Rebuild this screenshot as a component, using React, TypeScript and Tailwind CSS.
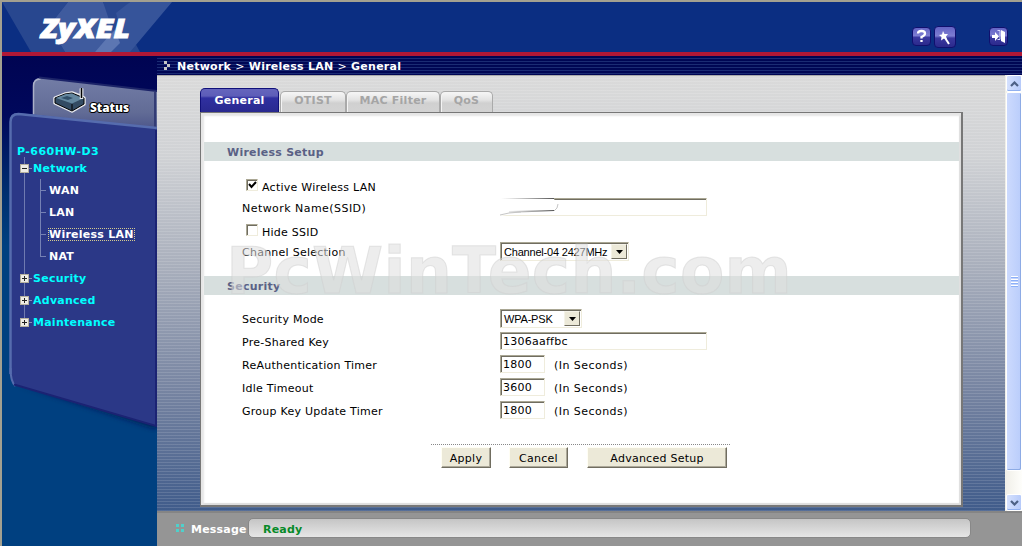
import { ReactNode } from "react";

const menu = ["WAN", "LAN", "Wireless LAN", "NAT"];
const sections = ["Security", "Advanced", "Maintenance"];

function TreeBox({ open }: { open?: boolean }) {
  return (
    <svg width="13" height="9" className="shrink-0" shapeRendering="crispEdges">
      <rect width="9" height="9" fill="#b5b09e" />
      <rect x="1" y="1" width="7" height="7" fill="#efede6" />
      <path d="M2 4h5v1H2z" fill="#222" />
      {!open && <path d="M4 2h1v5H4z" fill="#222" />}
      <path d="M9 4h3v1H9z" fill="#8690b8" />
    </svg>
  );
}

function Sidebar() {
  return (
    <aside className="relative w-[155px] shrink-0 bg-[linear-gradient(#000452_0,#00085c_60px,#003070_140px,#004080_190px)]">
      <svg className="absolute top-0 left-0" width="155" height="490">
        <defs>
          <linearGradient id="status" x2="0" y2="1">
            <stop offset="0" stopColor="#737da6" />
            <stop offset="0.6" stopColor="#626c96" />
            <stop offset="1" stopColor="#454e86" />
          </linearGradient>
          <filter id="soft" x="-10%" y="-10%" width="120%" height="120%">
            <feGaussianBlur stdDeviation="3" />
          </filter>
        </defs>
        <path d="M31 66V29q1-8 8-7l116 13v44z" fill="url(#status)" />
        <path d="M31.500 66V30q0-7 7-7" fill="none" stroke="#aab0c8" strokeWidth="1.500" />
        <path d="M37 21.500L155 35" stroke="#1c2468" strokeWidth="2" />
        <path d="M153 36v35" stroke="#333c75" strokeWidth="2" />
        <path d="M16 327L155 372v-12z" fill="#001448" filter="url(#soft)" />
        <path d="M8 64q1-8 9-7l138 15v298L19 331q-11-3-11-13z" fill="#2b3887" />
        <path d="M8.500 318V66q0-8 8-8L155 72" fill="none" stroke="#566cae" strokeWidth="2.500" />
        <path d="M8.500 312q0 14 5 18" fill="none" stroke="#566cae" strokeWidth="2" />
        <path d="M12 328.500L154 370V74" fill="none" stroke="#1b2373" strokeWidth="2" />
        {/* router */}
        <g strokeLinejoin="round">
          <path d="M53 42l10-4 7-1 8 3 4 2v6l-12 7-17-8zM79.500 33v10" fill="#e5e7ec" stroke="#e5e7ec" strokeWidth="3.500" />
          <path d="M53 42l10-4 7-1 12 5v6l-12 7-17-8z" fill="#334b63" stroke="#000" />
          <path d="M54 42l10-4 6-.5 11 5-11 5z" fill="#64879f" />
          <path d="M59 42l6-2 6 2-5 2z" fill="#304e68" />
          <path d="M70 48v6" stroke="#000" />
          <path d="M79.500 32v11" stroke="#dfe3ea" strokeWidth="3.500" />
          <path d="M79.500 32v10" stroke="#000" strokeWidth="1.500" />
        </g>
        <text x="88" y="56" fill="#fff" stroke="#000" strokeWidth="2" paintOrder="stroke" textLength="39" lengthAdjust="spacingAndGlyphs" className="font-[Open_Sans,sans-serif] text-[13px] font-extrabold">Status</text>
      </svg>
      <nav className="relative pt-[87px] pl-[15px] text-[11px] leading-[17px] font-bold tracking-[0.25px] text-[#00ffff]">
        <div className="absolute top-[101px] left-[22px] h-[164px] w-px bg-[#6f7ab0]" />
        <div className="tracking-[0.45px]">P-660HW-D3</div>
        <div className="relative flex h-[17px] items-center pl-[3px]">
          <TreeBox open />
          <span>Network</span>
        </div>
        <ul className="ml-[23px] pt-[2px] text-white">
          {menu.map((item) => (
            <li key={item} className="relative flex h-[22px] items-center">
              <i className={item === "NAT" ? "absolute top-0 left-0 h-[11px] w-px bg-[#7581b4]" : "absolute top-0 left-0 h-[22px] w-px bg-[#7581b4]"} />
              <i className="mr-[3px] h-px w-[6px] bg-[#7581b4]" />
              <span className={item === "Wireless LAN" ? "leading-[11px] outline-1 outline-dotted outline-[#d5cb90]" : ""}>{item}</span>
            </li>
          ))}
        </ul>
        {sections.map((s) => (
          <div key={s} className="relative flex h-[22px] items-center pl-[3px]">
            <TreeBox />
            <span>{s}</span>
          </div>
        ))}
      </nav>
    </aside>
  );
}

function HeaderIcon({ big, children }: { big?: boolean; children: ReactNode }) {
  return (
    <svg width={big ? 22 : 19} height={big ? 22 : 19} viewBox={big ? "0 0 22 22" : "0 0 19 19"}>
      <defs>
        <linearGradient id="btn" x2="0" y2="1">
          <stop offset="0" stopColor="#6262c4" />
          <stop offset="0.450" stopColor="#7d7dd2" />
          <stop offset="0.550" stopColor="#3a389f" />
          <stop offset="1" stopColor="#2b298b" />
        </linearGradient>
      </defs>
      <rect x="0.500" y="0.500" width={big ? 21 : 18} height={big ? 21 : 18} rx="3.500" fill="url(#btn)" stroke="#10106e" />
      {children}
    </svg>
  );
}

function Header() {
  return (
    <header className="relative flex h-[54px] shrink-0 justify-between overflow-hidden border-b-4 border-[#b01836] bg-[#0b2e82]">
      <svg width="180" height="50">
        <path d="M0 0h66L47 24l16 26H29z" fill="#28478f" />
        <path d="M66 0h35l30 50H63L47 24z" fill="#3f5b9e" />
        <path d="M101 0h27l-11 11 21 39h-20z" fill="#28478f" />
        <path d="M128 0h42l-42 50H93l24-28-3-11z" fill="#36549a" />
        <path d="M105 36l8-8 5 13-9 9H93z" fill="#5c76b2" />
        <text x="39" y="36" fill="#fff" stroke="#fff" strokeWidth="0.800" textLength="89" lengthAdjust="spacingAndGlyphs" className="font-[Open_Sans,sans-serif] text-[26px] font-extrabold italic">ZyXEL</text>
      </svg>
      <div className="flex pt-[24px] pr-[14px]">
        <div className="mt-px"><HeaderIcon><path d="M6 6.500q0-2.500 3.500-2.500T13 6.500q0 2-3.500 3.500v1.500M9.500 13v2" fill="none" stroke="#fff" strokeWidth="2.300" /></HeaderIcon></div>
        <div className="ml-[3px]">
          <HeaderIcon big>
            <path d="M9 5l1.500 3 3.500 0-2 2.500 1 3-3-1-3 2 .5-3.500-2.500-2 3-.5z" fill="#fff" />
            <path d="M10.500 11l4.500 7" stroke="#fff" strokeWidth="2" />
          </HeaderIcon>
        </div>
        <div className="mt-px ml-[33px]">
          <HeaderIcon>
            <path d="M3 8h3V5l4 4.500L6 14v-3H3zM12 3l4 2v11l-4-2z" fill="#fff" />
            <path d="M8.500 3.500H11v9H8.500" fill="none" stroke="#d8d8ff" />
          </HeaderIcon>
        </div>
      </div>
    </header>
  );
}

const tabClass = "flex h-[21px] items-center justify-center rounded-t-[5px] border border-b-0 border-[#aaa] bg-[linear-gradient(#f7f7f7,#e3e3e3_40%,#d0d0d0_55%,#d3d3d3)] pb-[3px] text-[#a5a5a5] shadow-[inset_1px_1px_#f4f4f4]";

function Tabs() {
  return (
    <div className="flex h-[24px] items-end pl-[43px] text-[11px] font-bold tracking-[0.25px]">
      <div className="flex h-[24px] w-[79px] items-center justify-center rounded-t-[5px] border border-b-0 border-[#10107a] bg-[linear-gradient(#6565bd_0,#5d5db8_7px,#3030a0_9px,#29298f)] text-white">General</div>
      <div className={tabClass + " ml-px w-[66px]"}>OTIST</div>
      <div className={tabClass + " w-[94px]"}>MAC Filter</div>
      <div className={tabClass + " w-[53px]"}>QoS</div>
    </div>
  );
}

const sunken = "border border-t-[#aaa794] border-l-[#aaa794] border-r-[#efecdc] border-b-[#efecdc] bg-white shadow-[inset_1px_1px_#706d60]";

function Field({ wide, value }: { wide?: boolean; value: string }) {
  return <div className={sunken + " -mt-px flex h-[18px] items-center pt-[2px] pl-[2px] " + (wide ? "w-[207px]" : "w-[45px]")}>{value}</div>;
}

function Select({ long, value }: { long?: boolean; value: string }) {
  return (
    <div className={sunken + " flex h-[19px] items-center justify-between pr-px pl-[3px] tracking-[-0.2px] " + (long ? "w-[129px]" : "w-[82px]")}>
      <span className="font-[Liberation_Sans,Arial,sans-serif]">{value}</span>
      <span className="flex h-[15px] w-[16px] items-center justify-center border border-t-[#f5f3e8] border-l-[#f5f3e8] border-r-[#706d60] border-b-[#706d60] bg-[#ece9d8]">
        <svg width="7" height="4"><path d="M0 0h7L3.500 4z" /></svg>
      </span>
    </div>
  );
}

function Check({ label, checked }: { label: string; checked?: boolean }) {
  return (
    <div className="flex h-[21px] items-center pl-[45px]">
      <span className={sunken + " -mt-[3px] mr-[4px] h-[12px] w-[12px]"}>
        {checked && <svg width="10" height="10"><path d="M2 4l2.500 3L9 2" fill="none" stroke="#000" strokeWidth="2" /></svg>}
      </span>
      <span className="pt-[2px]">{label}</span>
    </div>
  );
}

function Row({ label, children, note }: { label: string; children: ReactNode; note?: string }) {
  return (
    <div className="flex h-[23px] items-center pl-[41px]">
      <span className="w-[258px] pt-[2px]">{label}</span>
      {children}
      {note && <span className="ml-[9px] pt-[3px] tracking-[0.45px]">{note}</span>}
    </div>
  );
}

function SectionTitle({ children }: { children: ReactNode }) {
  return <h2 className="mr-[2px] ml-[3px] flex h-[19px] items-center bg-[#d7dfde] pt-[2px] pl-[23px] font-bold tracking-[0.25px] text-[#5a6185]">{children}</h2>;
}

function Button({ className, children }: { className: string; children: ReactNode }) {
  return <button className={"h-[21px] border border-t-[#fffef4] border-l-[#fffef4] border-r-[#706d60] border-b-[#706d60] bg-[#ece9d8] pt-[2px] shadow-[inset_-1px_-1px_#aca899] " + className}>{children}</button>;
}

function Panel() {
  return (
    <section className="relative ml-[43px] h-[395px] w-[763px] border border-r-2 border-b-2 border-[#777] bg-white pt-[29px] text-[11px] tracking-[0.25px] text-black shadow-[inset_3px_3px_2px_#e6e6e6,inset_-2px_-2px_1px_#ddd]">
      <SectionTitle>Wireless Setup</SectionTitle>
      <div className="pt-[15px]">
        <Check label="Active Wireless LAN" checked />
        <div className="flex h-[21px] items-center pl-[41px]">
          <span className="w-[258px] pt-[2px] tracking-[0.45px]">Network Name(SSID)</span>
          <div className="relative">
            <Field wide value="" />
            {/* cleared name */}
            <svg className="absolute -top-[2px] -left-px" width="62" height="20">
              <defs>
                <linearGradient id="smear"><stop stopColor="#777" stopOpacity="0" /><stop offset="1" stopColor="#555" /></linearGradient>
              </defs>
              <path d="M0 0h55v2l3 5-3 6-25 2-29 4H0z" fill="#fff" />
              <path d="M2 1h53v1H2zM10 14l45-1v1l-45 2z" fill="url(#smear)" />
              <path d="M55 14l3-3 1-4M1 18l9-2 12-1" fill="none" stroke="#c5c5c5" />
            </svg>
          </div>
        </div>
        <div className="h-[3px]" />
        <Check label="Hide SSID" />
        <div className="-mt-[2px]"><Row label="Channel Selection"><Select long value="Channel-04 2427MHz" /></Row></div>
        <div className="h-[13px]" />
      </div>
      <SectionTitle>Security</SectionTitle>
      <div className="pt-[12px]">
        <Row label="Security Mode"><Select value="WPA-PSK" /></Row>
        <Row label="Pre-Shared Key"><Field wide value="1306aaffbc" /></Row>
        <Row label="ReAuthentication Timer" note="(In Seconds)"><Field value="1800" /></Row>
        <Row label="Idle Timeout" note="(In Seconds)"><Field value="3600" /></Row>
        <Row label="Group Key Update Timer" note="(In Seconds)"><Field value="1800" /></Row>
      </div>
      <div className="mt-[22px] ml-[230px] flex w-[299px] border-t border-dotted border-[#888] pt-[2px] pl-[10px]">
        <Button className="w-[50px]">Apply</Button>
        <Button className="ml-[18px] w-[59px]">Cancel</Button>
        <Button className="ml-[19px] w-[140px]">Advanced Setup</Button>
      </div>
      <svg className="pointer-events-none absolute top-[120px] left-[22px]" width="590" height="75">
        <text x="3" y="60" textLength="566" lengthAdjust="spacingAndGlyphs" fill="#dedede" fillOpacity=".55" stroke="#d0d0d0" strokeOpacity=".5" className="font-[DejaVu_Sans,sans-serif] text-[64px] font-bold">PcWinTech.com</text>
      </svg>
    </section>
  );
}

function ScrollButton({ down }: { down?: boolean }) {
  return (
    <div className="flex h-[17px] w-full items-center justify-center rounded-[2px] border border-white bg-[linear-gradient(90deg,#d5e1fe,#b7cbfa)] shadow-[inset_0_-1px_#91b0ef]">
      <svg width="9" height="6" className={down ? "rotate-180" : ""}><path d="M1 5l3.500-3.500L8 5" fill="none" stroke="#4d6185" strokeWidth="2.200" /></svg>
    </div>
  );
}

function Scrollbar() {
  return (
    <div className="flex w-[17px] shrink-0 flex-col bg-[linear-gradient(90deg,#f0efe8,#fefefb)] pl-px">
      <ScrollButton />
      <div className="flex h-[379px] w-full flex-col items-center justify-center gap-px rounded-[2px] border border-white bg-[linear-gradient(90deg,#ccdafe,#bacdfb)] shadow-[inset_-1px_-1px_#8dabe5]">
        {[0, 1, 2, 3].map((n) => (
          <i key={n} className="h-[2px] w-[7px] border-t border-white bg-[#8cb0f8]" />
        ))}
      </div>
      <div className="grow" />
      <ScrollButton down />
    </div>
  );
}

export default function App() {
  return (
    <div className="flex h-[546px] w-[1022px] flex-col overflow-hidden border-t-2 border-l-2 border-[#a3a090] bg-[#004080] font-[Verdana,DejaVu_Sans,sans-serif] leading-[14px]">
      <Header />
      <div className="flex min-h-0 grow">
        <Sidebar />
        <main className="flex min-w-0 grow flex-col">
          <div className="flex h-[19px] shrink-0 items-center bg-[repeating-linear-gradient(#000654_0,#000654_2px,#1b2b73_2px,#1b2b73_3px)] pl-[7px] text-[11px] font-bold tracking-[0.25px] text-white">
            <svg width="13" height="10" shapeRendering="crispEdges"><path d="M0 0h3v3H0zM3 3h3v3H3zM0 6h3v3H0z" fill="#c5c5c5" /></svg>
            <span className="pt-[2px]">Network <span className="font-normal">&gt;</span> Wireless LAN <span className="font-normal">&gt;</span> General</span>
          </div>
          <div className="flex h-[436px] shrink-0">
            <div className="grow border-t border-[#aaa] bg-[repeating-linear-gradient(#fff0_0,#fff0_2px,#ffffff20_2px,#ffffff20_3px),linear-gradient(#dadada_0,#d0d2d5_80px,#a9afbc_190px,#7482a0_320px,#3f5b8a_436px)] pt-[12px]">
              <Tabs />
              <Panel />
            </div>
            <Scrollbar />
          </div>
          <footer className="flex grow items-center border-t-2 border-[#858585] bg-[#959595] pb-[3px] pl-[19px] text-[11px] font-bold tracking-[0.2px] text-white">
            <svg width="15" height="9" shapeRendering="crispEdges"><path d="M0 0h3v3H0zM5 0h3v3H5zM0 5h3v3H0zM5 5h3v3H5z" fill="#4fd0cb" /></svg>
            <span className="w-[57px] pt-[3px]">Message</span>
            <div className="flex h-[20px] w-[723px] items-center rounded-[5px] border border-[#888] bg-[linear-gradient(#c5c5c5,#e6e6e6)] pt-[3px] pl-[14px] text-[#078a28]">Ready</div>
          </footer>
        </main>
      </div>
    </div>
  );
}
